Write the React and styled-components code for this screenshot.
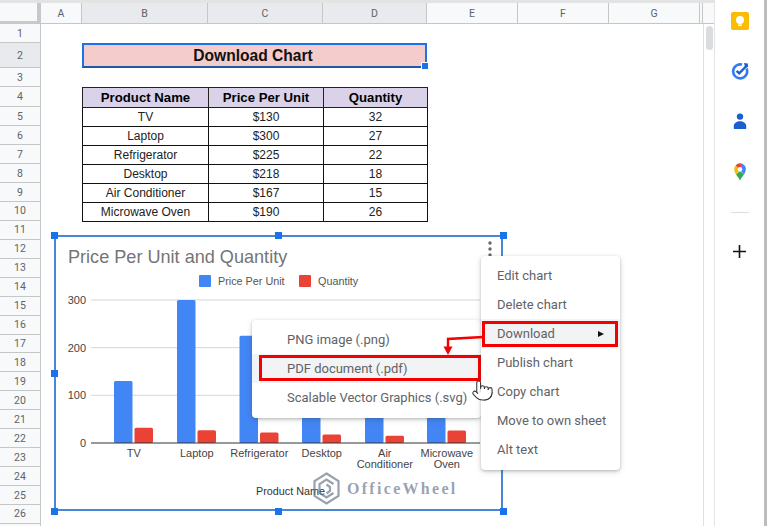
import React from "react";
import styled, { createGlobalStyle } from "styled-components";
import { Pointer } from "lucide-react";

const GlobalStyle = createGlobalStyle`
  html, body {
    margin: 0;
    padding: 0;
    background: #fff;
  }
  body {
    font-family: "Liberation Sans", Arial, sans-serif;
  }
`;

const Page = styled.div`
  position: relative;
  display: flex;
  width: 767px;
  height: 526px;
  overflow: hidden;
  background: #fff;
`;

const Sheet = styled.div`
  display: flex;
  flex-direction: column;
  width: 714px;
  height: 526px;
  border-top: 3px solid #e3e3e3;
  box-sizing: border-box;
`;

const ColumnBar = styled.div`
  display: flex;
  height: 21px;
  flex: none;
  background: #f8f9fa;
  border-bottom: 1px solid #c4c7c5;
  box-sizing: border-box;
`;

const Corner = styled.div`
  width: 41px;
  flex: none;
  box-sizing: border-box;
  border-right: 4px solid #c6c8ca;
  border-bottom: 3px solid #c6c8ca;
  margin-bottom: -1px;
`;

const ColumnCell = styled.div`
  display: flex;
  align-items: center;
  justify-content: center;
  width: ${(p) => p.$w}px;
  flex: none;
  box-sizing: border-box;
  border-right: 1px solid #c4c7c5;
  background: ${(p) => (p.$on ? "#e8eaed" : "#f8f9fa")};
  color: #5f6368;
  font-family: Roboto, sans-serif;
  font-size: 10.5px;
`;

const Body = styled.div`
  display: flex;
  flex: 1;
  min-height: 0;
`;

const RowBar = styled.div`
  width: 41px;
  flex: none;
  background: #f8f9fa;
  box-sizing: border-box;
  border-right: 1px solid #c4c7c5;
`;

const RowCell = styled.div`
  display: flex;
  align-items: center;
  justify-content: center;
  height: ${(p) => p.$h}px;
  box-sizing: border-box;
  border-bottom: 1px solid #c4c7c5;
  background: ${(p) => (p.$on ? "#e8eaed" : "#f8f9fa")};
  color: #5f6368;
  font-family: Roboto, sans-serif;
  font-size: 10.5px;
`;

const Canvas = styled.div`
  flex: 1;
  padding: 19.3px 0 0 41px;
  box-sizing: border-box;
`;

const TitleCell = styled.div`
  position: relative;
  display: flex;
  align-items: center;
  justify-content: center;
  width: 345px;
  height: 25px;
  box-sizing: border-box;
  padding-right: 3px;
  background: #f4cccc;
  border: 2px solid #1a73e8;
  border-bottom-color: #1c5aa8;
  color: #111;
  font-size: 15.6px;
  font-weight: 700;
`;

const CellHandle = styled.span`
  position: absolute;
  right: -4px;
  bottom: -4px;
  width: 6px;
  height: 6px;
  background: #1a73e8;
  border: 0.5px solid #fff;
`;

const DataTable = styled.table`
  width: 345px;
  margin-top: 19px;
  border-collapse: collapse;
  table-layout: fixed;
  color: #222;
  font-size: 12px;
  text-align: center;
`;

const HeadCell = styled.th`
  height: 20px;
  padding: 0;
  box-sizing: border-box;
  background: #d9d2e9;
  border: 1px solid #222;
  color: #000;
  font-size: 13.2px;
  font-weight: 700;
`;

const DataCell = styled.td`
  height: 18.95px;
  padding: 0;
  box-sizing: border-box;
  border: 1px solid #111;
`;

const Scrollbar = styled.div`
  width: 11px;
  flex: none;
  box-sizing: border-box;
  padding: 2px 2px 0;
  border-left: 1px solid #e0e0e0;
`;

const ScrollThumb = styled.div`
  width: 7px;
  height: 24px;
  border-radius: 4px;
  background: #dadce0;
`;

const SidePanel = styled.aside`
  display: flex;
  flex-direction: column;
  align-items: center;
  width: 53px;
  flex: none;
  box-sizing: border-box;
  padding-top: 12px;
  background: #fff;
  border-left: 1px solid #e4e4e4;
  border-right: 3px solid #bdbdbd;
`;

const SideSlot = styled.div`
  display: flex;
  align-items: center;
  justify-content: center;
  height: 18px;

  & + & {
    margin-top: 32.3px;
  }
`;

const SideRule = styled.div`
  width: 18px;
  height: 1px;
  margin: 31px 0 32.5px;
  background: #dadce0;
`;

const ChartFrame = styled.div`
  position: absolute;
  left: 54px;
  top: 235px;
  width: 449px;
  height: 276px;
  box-sizing: border-box;
  background: #fff;
  border: 2px solid #4a86d8;
`;

const ChartSvg = styled.svg`
  display: block;
  position: absolute;
  left: -2px;
  top: -2px;
  font-family: "Liberation Sans", Arial, sans-serif;
`;

const Handle = styled.span`
  position: absolute;
  left: ${(p) => p.$x}px;
  top: ${(p) => p.$y}px;
  width: 7px;
  height: 7px;
  margin: -3.5px 0 0 -3.5px;
  background: #1a73e8;
`;

const Menu = styled.div`
  position: absolute;
  left: ${(p) => p.$x}px;
  top: ${(p) => p.$y}px;
  width: ${(p) => p.$w}px;
  box-sizing: border-box;
  padding: ${(p) => p.$pad};
  background: #fff;
  border-radius: 4px;
  box-shadow: 0 1px 3px rgba(60, 64, 67, 0.3), 0 2px 6px rgba(60, 64, 67, 0.15);
`;

const MenuItem = styled.div`
  position: relative;
  display: flex;
  align-items: center;
  justify-content: space-between;
  height: 28.9px;
  padding: ${(p) => p.$pad};
  box-sizing: border-box;
  background: ${(p) => (p.$hot ? "#f1f3f4" : "transparent")};
  color: #5f6368;
  font-family: Roboto, sans-serif;
  font-size: 13px;
  white-space: nowrap;
`;

const RedBox = styled.span`
  position: absolute;
  inset: ${(p) => p.$inset};
  border: 3px solid #f40000;
`;

const SubArrow = styled.span`
  width: 0;
  height: 0;
  border-left: 6px solid #111;
  border-top: 3.5px solid transparent;
  border-bottom: 3.5px solid transparent;
`;

const OverlaySvg = styled.svg`
  position: absolute;
  left: 0;
  top: 0;
  pointer-events: none;
`;

const CursorIcon = styled(Pointer)`
  position: absolute;
  left: 471px;
  top: 379px;
  fill: #fff;
  color: #333;
`;

const Watermark = styled.div`
  position: absolute;
  left: 313px;
  top: 472px;
  display: flex;
  align-items: center;
  gap: 7px;
  color: rgba(105, 115, 135, 0.68);
  font-family: "Liberation Serif", serif;
  font-size: 16px;
  font-weight: 700;
  letter-spacing: 2.3px;
`;

const columns = [
  { name: "A", w: 41 },
  { name: "B", w: 126, on: true },
  { name: "C", w: 115, on: true },
  { name: "D", w: 104, on: true },
  { name: "E", w: 91 },
  { name: "F", w: 91 },
  { name: "G", w: 91 },
  { name: "", w: 3 },
];

const rowHeights = { 1: 19.3, 2: 25, 3: 19, 4: 20 };
const rows = Array.from({ length: 26 }, (_, i) => i + 1);

const products = [
  ["TV", "$130", 32],
  ["Laptop", "$300", 27],
  ["Refrigerator", "$225", 22],
  ["Desktop", "$218", 18],
  ["Air Conditioner", "$167", 15],
  ["Microwave Oven", "$190", 26],
];

const bars = [
  { x: 114, price: 130, qty: 32, label: ["TV"] },
  { x: 177, price: 300, qty: 27, label: ["Laptop"] },
  { x: 239.5, price: 225, qty: 22, label: ["Refrigerator"] },
  { x: 302, price: 218, qty: 18, label: ["Desktop"] },
  { x: 365, price: 167, qty: 15, label: ["Air", "Conditioner"] },
  { x: 427, price: 190, qty: 26, label: ["Microwave", "Oven"] },
];

const chartMenu = ["Edit chart", "Delete chart", "Download", "Publish chart", "Copy chart", "Move to own sheet", "Alt text"];
const formatMenu = ["PNG image (.png)", "PDF document (.pdf)", "Scalable Vector Graphics (.svg)"];

const handles = [
  [54, 235], [278, 235], [503, 235],
  [54, 373], [54, 511], [278, 511], [503, 511],
];

// chart drawn in page coordinates, shifted by the frame position
const Chart = () => {
  const y0 = 443;
  const scale = 0.4767;
  return (
    <ChartSvg width="449" height="276" viewBox="54 235 449 276">
      <text x="68" y="262.5" fontSize="18.1" fill="#757575">Price Per Unit and Quantity</text>
      <rect x="199" y="275" width="12" height="12" rx="1" fill="#4285f4" />
      <text x="218" y="285" fontSize="10.8" fill="#555">Price Per Unit</text>
      <rect x="299" y="275" width="12" height="12" rx="1" fill="#ea4335" />
      <text x="318" y="285" fontSize="10.8" fill="#555">Quantity</text>
      {[300, 200, 100].map((v) => (
        <line key={v} x1="91" x2="480" y1={y0 - v * scale} y2={y0 - v * scale} stroke="#d6d6d6" />
      ))}
      {[300, 200, 100, 0].map((v) => (
        <text key={v} x="86" y={y0 - v * scale + 4} fontSize="11" textAnchor="end" fill="#444">{v}</text>
      ))}
      {bars.map((b) => (
        <g key={b.x}>
          <rect x={b.x} y={y0 - b.price * scale} width="18.5" height={b.price * scale} rx="1.5" fill="#4285f4" />
          <rect x={b.x + 20.5} y={y0 - b.qty * scale} width="18.5" height={b.qty * scale} rx="1.5" fill="#ea4335" />
          {b.label.map((line, i) => (
            <text key={line} x={b.x + 19.8} y={457 + i * 11} fontSize="11" textAnchor="middle" fill="#444">{line}</text>
          ))}
        </g>
      ))}
      <line x1="91" x2="480" y1={y0} y2={y0} stroke="#333" />
      <text x="290.5" y="495" fontSize="10.8" textAnchor="middle" fill="#333">Product Name</text>
      <circle cx="490" cy="243" r="1.7" fill="#666" />
      <circle cx="490" cy="249" r="1.7" fill="#666" />
      <circle cx="490" cy="255" r="1.7" fill="#666" />
    </ChartSvg>
  );
};

const App = () => (
  <>
    <GlobalStyle />
    <Page>
      <Sheet>
        <ColumnBar>
          <Corner />
          {columns.map((c, i) => (
            <ColumnCell key={i} $w={c.w} $on={c.on}>{c.name}</ColumnCell>
          ))}
        </ColumnBar>
        <Body>
          <RowBar>
            {rows.map((r) => (
              <RowCell key={r} $h={rowHeights[r] || 18.95} $on={r === 2}>{r}</RowCell>
            ))}
          </RowBar>
          <Canvas>
            <TitleCell>
              Download Chart
              <CellHandle />
            </TitleCell>
            <DataTable>
              <colgroup>
                <col width="126" />
                <col width="115" />
                <col width="104" />
              </colgroup>
              <thead>
                <tr>
                  <HeadCell>Product Name</HeadCell>
                  <HeadCell>Price Per Unit</HeadCell>
                  <HeadCell>Quantity</HeadCell>
                </tr>
              </thead>
              <tbody>
                {products.map((p) => (
                  <tr key={p[0]}>
                    {p.map((v) => (
                      <DataCell key={v}>{v}</DataCell>
                    ))}
                  </tr>
                ))}
              </tbody>
            </DataTable>
          </Canvas>
          <Scrollbar>
            <ScrollThumb />
          </Scrollbar>
        </Body>
      </Sheet>

      <SidePanel>
        <SideSlot>
          <svg width="18" height="18" viewBox="0 0 18 18">
            <rect width="18" height="18" rx="2" fill="#fbbc04" />
            <circle cx="9" cy="8" r="4" fill="#fff" />
            <rect x="7.2" y="12.4" width="3.6" height="1.6" fill="#fff" />
          </svg>
        </SideSlot>
        <SideSlot>
          <svg width="18" height="18" viewBox="0 0 18 18" fill="none">
            <path d="M15.6 6.6A7 7 0 1 1 11 2.6" stroke="#2f7bf0" strokeWidth="2.6" />
            <path d="M5.6 8.8l2.6 2.6L15.4 4" stroke="#1a5fd0" strokeWidth="2.4" />
            <path d="M13 1l3.8 .4l.4 3.6l-3 .4z" fill="#1a5fd0" />
          </svg>
        </SideSlot>
        <SideSlot>
          <svg width="18" height="18" viewBox="0 0 18 18">
            <circle cx="9" cy="3.6" r="3.2" fill="#1a5fd0" />
            <path d="M2.8 15.5v-2.7C2.8 10 6 8.2 9 8.2s6.2 1.8 6.2 4.6v2.7c0 .3-.3.6-.6.6H3.4c-.3 0-.6-.3-.6-.6z" fill="#1a5fd0" />
          </svg>
        </SideSlot>
        <SideSlot>
          <svg width="18" height="18" viewBox="0 0 18 18">
            <path d="M5 11.4C6.4 13.4 8.2 15.2 9 17.8c.8-2.6 2.6-4.4 4-6.4L9 8z" fill="#34a853" />
            <path d="M3.2 6c0 2.2 .8 3.8 1.8 5.4L9 7.6 4.6 2.6A5.8 5.8 0 0 0 3.2 6z" fill="#fbbc04" />
            <path d="M4.6 2.4A5.8 5.8 0 0 1 11.4.8L9 7z" fill="#ea4335" />
            <path d="M11.2.7A5.8 5.8 0 0 1 14.8 6c0 2.2-.8 3.8-1.8 5.4L9 7z" fill="#4285f4" />
            <circle cx="9" cy="6.2" r="2.2" fill="#fff" />
          </svg>
        </SideSlot>
        <SideRule />
        <svg width="13" height="13" viewBox="0 0 13 13">
          <path d="M6.5 0v13M0 6.5h13" stroke="#111" strokeWidth="1.6" />
        </svg>
      </SidePanel>

      <ChartFrame>
        <Chart />
      </ChartFrame>
      {handles.map(([x, y]) => (
        <Handle key={`${x}-${y}`} $x={x} $y={y} />
      ))}

      <Menu $x={252} $y={320} $w={229} $pad="5.5px 0 6px">
        {formatMenu.map((label, i) => (
          <MenuItem key={label} $hot={i === 1} $pad="0 0 0 35px">
            {label}
            {i === 1 && <RedBox $inset="1px 0 2.5px 7px" />}
          </MenuItem>
        ))}
      </Menu>
      <Menu $x={481} $y={256} $w={139} $pad="5.5px 0 6px">
        {chartMenu.map((label) => (
          <MenuItem key={label} $hot={label === "Download"} $pad="0 16px">
            {label}
            {label === "Download" && (
              <>
                <SubArrow />
                <RedBox $inset="1.5px 2px 1.5px 1px" />
              </>
            )}
          </MenuItem>
        ))}
      </Menu>

      <OverlaySvg width="767" height="526">
        <path d="M483 337L448 339V348" fill="none" stroke="#f40000" strokeWidth="2.4" />
        <path d="M443.5 346.5h9l-4.5 8.5z" fill="#f40000" />
      </OverlaySvg>
      <CursorIcon size={23} strokeWidth={1.1} />

      <Watermark>
        <svg width="27" height="33" viewBox="0 0 27 33" fill="none" stroke="rgba(105,115,135,0.68)" strokeWidth="2.2">
          <path d="M13.5 1.5L25.5 9V24L13.5 31.5L1.5 24V9z" />
          <path d="M20.5 12L13.5 7.5L6.5 12V21L13.5 25.5L20.5 21" />
          <path d="M13.5 12.5L17 15V19L13.5 21.5" />
        </svg>
        OfficeWheel
      </Watermark>
    </Page>
  </>
);

export default App;
